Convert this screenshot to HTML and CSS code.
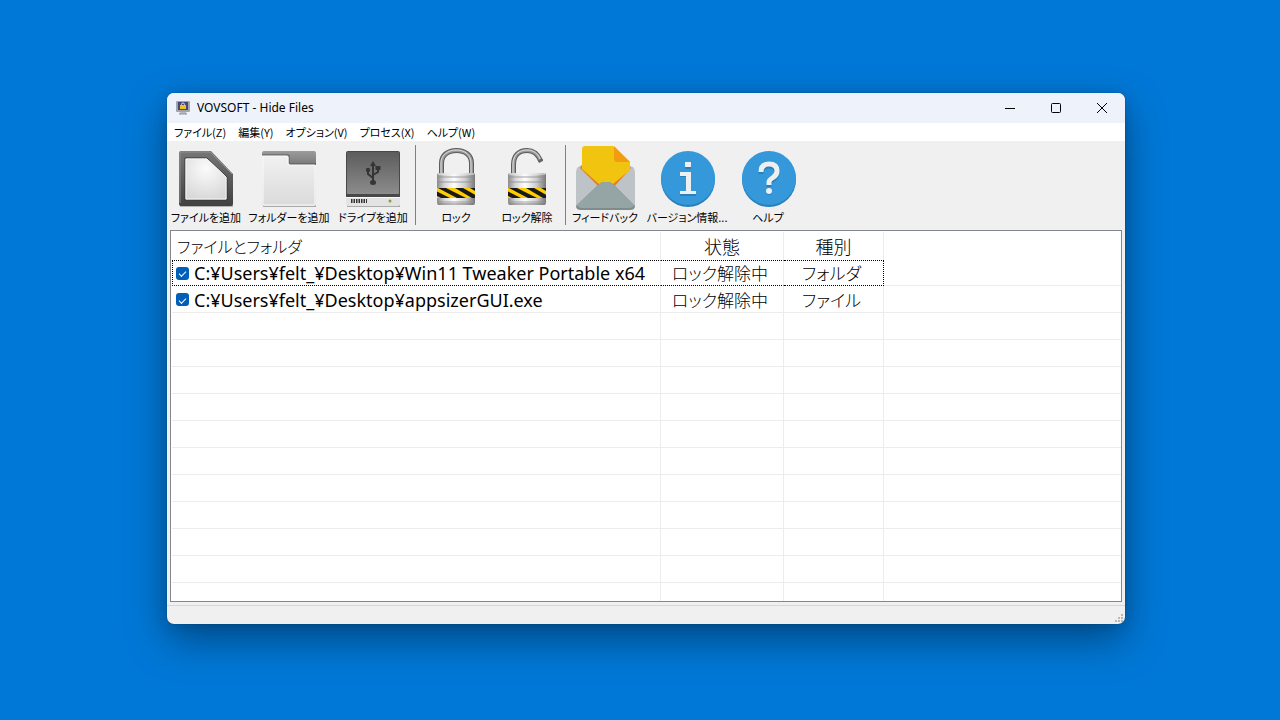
FILE: index.html
```html
<!DOCTYPE html>
<html lang="ja">
<head>
<meta charset="utf-8">
<title>VOVSOFT - Hide Files</title>
<link rel="stylesheet" href="styles.css">
</head>
<body>
<main class="window">
  <header class="titlebar">
    <svg class="app-icon" viewBox="0 0 14 14" aria-hidden="true">
      <rect x="0" y="0" width="14" height="11" rx="1" fill="#a3a5ab"/>
      <rect x="2" y="1" width="10" height="8" fill="#45467c"/>
      <path d="M5.500 5V3.500a1.500 1.500 0 0 1 3 0V5" fill="none" stroke="#d9d9de"/>
      <rect x="4" y="4" width="6" height="4" fill="#f0c21c"/>
      <path d="M4 11h6l1 2H3z" fill="#b9bac0"/>
      <path d="M3 13h8" stroke="#8f9096"/>
    </svg>
    <h1 class="title">VOVSOFT - Hide Files</h1>
    <div class="controls">
      <button class="control" aria-label="最小化"><svg viewBox="0 0 12 12"><path d="M1 6.500h10"/></svg></button>
      <button class="control" aria-label="最大化"><svg viewBox="0 0 12 12"><rect x="1.500" y="1.500" width="9" height="9" rx="1"/></svg></button>
      <button class="control" aria-label="閉じる"><svg viewBox="0 0 12 12"><path d="M1 1l10 10M11 1L1 11"/></svg></button>
    </div>
  </header>

  <nav class="menubar">
    <button class="menu">ファイル(Z)</button>
    <button class="menu">編集(Y)</button>
    <button class="menu">オプション(V)</button>
    <button class="menu">プロセス(X)</button>
    <button class="menu">ヘルプ(W)</button>
  </nav>

  <div class="toolbar">
    <button class="tool tool-file">
      <svg viewBox="0 0 64 64" aria-hidden="true">
        <defs>
          <linearGradient id="dark" x1="0" y1="0" x2="0" y2="1"><stop offset="0" stop-color="#777"/><stop offset="1" stop-color="#414141"/></linearGradient>
          <radialGradient id="paper" cx=".5" cy=".25" r=".8"><stop offset="0" stop-color="#fbfbfb"/><stop offset="1" stop-color="#d6d6d6"/></radialGradient>
        </defs>
        <path d="M6 60h53" stroke="#b5b5b5" stroke-width="2"/>
        <path d="M7 5h30l22 23v30q0 2-2 2H7q-2 0-2-2V7q0-2 2-2z" fill="url(#dark)"/>
        <path d="M6 57V7l1-1h29l22 22" fill="none" stroke="#909090"/>
        <path d="M11 12h22l20 19v23H11z" fill="url(#paper)" stroke="#363636"/>
        <path d="M12 53V13h21l19 18v22z" fill="none" stroke="#f5f5f5"/>
      </svg>
      <span>ファイルを追加</span>
    </button>
    <button class="tool tool-folder">
      <svg viewBox="0 0 64 64" aria-hidden="true">
        <defs>
          <linearGradient id="tab" x1="0" y1="0" x2="0" y2="1"><stop offset="0" stop-color="#9b9b9b"/><stop offset="1" stop-color="#696969"/></linearGradient>
          <linearGradient id="front" x1="0" y1="0" x2="0" y2="1"><stop offset="0" stop-color="#f1f1f1"/><stop offset="1" stop-color="#dadada"/></linearGradient>
        </defs>
        <path d="M6 60h53" stroke="#aaa" stroke-width="2"/>
        <path d="M7 5h50q2 0 2 2v18H5V7q0-2 2-2z" fill="url(#tab)"/>
        <path d="M5 10h25q2 0 2 2v5q0 2 2 2h25v39q0 2-2 2H7q-2 0-2-2z" fill="url(#front)"/>
        <path d="M5 9h26q1 0 1 1v7q0 1 1 1h26" fill="none" stroke="#575757"/>
        <path d="M5 10h25q1 0 1 1v7q0 1 1 1h26v39q0 1-1 1H7q-1 0-1-1V10" fill="none" stroke="#fafafa"/>
      </svg>
      <span>フォルダーを追加</span>
    </button>
    <button class="tool tool-drive">
      <svg viewBox="0 0 64 64" aria-hidden="true">
        <defs>
          <linearGradient id="drive" x1="0" y1="0" x2="0" y2="1"><stop offset="0" stop-color="#5c5c5c"/><stop offset="1" stop-color="#8c8c8c"/></linearGradient>
        </defs>
        <path d="M6 60h53" stroke="#aaa" stroke-width="2"/>
        <rect x="5" y="5" width="54" height="50" rx="2" fill="#484848"/>
        <rect x="6" y="6" width="52" height="42" rx="1" fill="url(#drive)"/>
        <path d="M5 51h54v7q0 2-2 2H7q-2 0-2-2z" fill="#e3e3e3"/>
        <path d="M5 51.500h54" stroke="#fafafa"/>
        <path d="M10 55h16" stroke="#333" stroke-width="4" stroke-dasharray="1.500 1"/>
        <circle cx="49" cy="55" r="1.500" fill="#80a336"/>
        <g fill="none" stroke="#353535" stroke-width="2"><path d="M32 18v18M32 32l-5-4v-5M32 29l5-3v-4"/></g>
        <path d="M32 15l3 5h-6zM34.500 20h5v4h-5z" fill="#353535"/><circle cx="27" cy="24" r="2.200" fill="#353535"/><ellipse cx="32" cy="36.500" rx="3" ry="2.500" fill="#353535"/>
      </svg>
      <span>ドライブを追加</span>
    </button>
    <span class="separator"></span>
    <button class="tool tool-lock">
      <svg viewBox="0 0 64 64" aria-hidden="true">
        <defs>
          <linearGradient id="steel" x1="0" y1="0" x2="1" y2="0"><stop offset="0" stop-color="#8c8c8c"/><stop offset=".2" stop-color="#d7d7d7"/><stop offset=".45" stop-color="#fff"/><stop offset=".75" stop-color="#ccc"/><stop offset="1" stop-color="#777"/></linearGradient>
          <clipPath id="band"><rect x="13" y="42" width="38" height="10"/></clipPath>
        </defs>
        <path d="M17.500 28V17.500C17.500 9 24 4.500 32.500 4.500S47.500 9 47.500 17.500V28" fill="none" stroke="#5c5c5c" stroke-width="5"/>
        <path d="M17.500 28V17.500C17.500 9 24 4.500 32.500 4.500S47.500 9 47.500 17.500V28" fill="none" stroke="#999" stroke-width="3"/>
        <path d="M17 28V17C17 9 24 4 32.500 4S47 9 47 17V28" fill="none" stroke="#ddd"/>
        <rect x="13" y="27" width="38" height="32" rx="2" fill="url(#steel)"/>
        <path d="M14 31h36M14 36h36M14 56h36" stroke="#8d8d8d" opacity=".4" stroke-width="2"/>
        <path d="M14 28h36" stroke="#eee"/><path d="M14 58h36" stroke="#777"/>
        <rect x="13" y="42" width="38" height="10" fill="#fc0"/>
        <path clip-path="url(#band)" d="M-3 42h9l20 10h-9zM14 42h8l20 10h-9zM31 42h8l18 10h-9zM46 42h5v3z" fill="#191919"/>
      </svg>
      <span>ロック</span>
    </button>
    <button class="tool tool-unlock">
      <svg viewBox="0 0 64 64" aria-hidden="true">
        <path d="M18.500 28V19C18.500 9 24 4.500 32 4.500c7 0 11 4 13.500 10" fill="none" stroke="#5c5c5c" stroke-width="5"/>
        <path d="M18.500 28V19C18.500 9 24 4.500 32 4.500c7 0 11 4 13 9" fill="none" stroke="#999" stroke-width="3"/>
        <path d="M18 28V18C18 9 24 4 32 4c7 0 11 4 13 9" fill="none" stroke="#ddd"/>
        <path d="M43 15l5-2v2l-4 2z" fill="#666"/>
        <rect x="13" y="27" width="38" height="32" rx="2" fill="url(#steel)"/>
        <path d="M14 31h36M14 36h36M14 56h36" stroke="#8d8d8d" opacity=".4" stroke-width="2"/>
        <path d="M14 28h36" stroke="#eee"/><path d="M14 58h36" stroke="#777"/>
        <rect x="13" y="42" width="38" height="10" fill="#fc0"/>
        <path clip-path="url(#band)" d="M-3 42h9l20 10h-9zM14 42h8l20 10h-9zM31 42h8l18 10h-9zM46 42h5v3z" fill="#191919"/>
      </svg>
      <span>ロック解除</span>
    </button>
    <span class="separator"></span>
    <button class="tool tool-feedback">
      <svg viewBox="0 0 64 64" aria-hidden="true">
        <path d="M3 26q0-3 2-5l4-2h46l5 2q2 2 2 5v35H3z" fill="#bdc3c7"/>
        <path d="M7 22l20 20h13l18-20-3-3H9z" fill="#e67e22"/>
        <path d="M12 0h28l17 16v8L40 38H26L9 23V3q0-3 3-3z" fill="#f1c40f"/>
        <path d="M41 0l16 16H44q-3 0-3-3z" fill="#f39c12"/>
        <path d="M3 60l22-21q3-3 6-3h4q3 0 6 3l21 21q0 4-5 4H8q-5 0-5-4z" fill="#7f8c8d"/>
        <path d="M4 59l21-20q3-3 6-3h4q3 0 6 3l20 20q-1 3-5 3H9q-4 0-5-3z" fill="#95a5a6"/>
      </svg>
      <span>フィードバック</span>
    </button>
    <button class="tool tool-about">
      <svg viewBox="0 0 64 64" aria-hidden="true">
        <circle cx="33" cy="34" r="27" fill="#2980b9"/><circle cx="33" cy="32" r="27" fill="#3498db"/>
        <path transform="translate(0 1)" d="M30 16h6v6h-6zM25 26h11v19h5v4H25v-4h6V30h-6z" fill="#2980b9"/>
        <path d="M30 16h6v5h-6zM25 26h11v19h5v3H25v-3h6V30h-6z" fill="#ecf0f1"/>
      </svg>
      <span>バージョン情報...</span>
    </button>
    <button class="tool tool-help">
      <svg viewBox="0 0 64 64" aria-hidden="true">
        <circle cx="33" cy="34" r="27" fill="#2980b9"/><circle cx="33" cy="32" r="27" fill="#3498db"/>
        <g fill="none" stroke="#2980b9" stroke-width="5" transform="translate(0 1)"><path d="M25 27q0-8 8-8t8 7q0 4-4 6.500T33 37v3"/></g>
        <path d="M25 26q0-8 8-8t8 7q0 4-4 6.500T33 36v3" fill="none" stroke="#ecf0f1" stroke-width="5"/>
        <circle cx="33" cy="46" r="3" fill="#2980b9"/><circle cx="33" cy="45" r="3" fill="#ecf0f1"/>
      </svg>
      <span>ヘルプ</span>
    </button>
  </div>

  <section class="list">
    <table class="files">
      <colgroup><col class="col-path"><col class="col-state"><col class="col-kind"><col></colgroup>
      <thead><tr><th>ファイルとフォルダ</th><th>状態</th><th>種別</th><td></td></tr></thead>
      <tbody>
        <tr class="focused"><td><label><input type="checkbox" checked>C:¥Users¥felt_¥Desktop¥Win11 Tweaker Portable x64</label></td><td>ロック解除中</td><td>フォルダ</td><td></td></tr>
        <tr><td><label><input type="checkbox" checked>C:¥Users¥felt_¥Desktop¥appsizerGUI.exe</label></td><td>ロック解除中</td><td>ファイル</td><td></td></tr>
        <tr><td></td><td></td><td></td><td></td></tr>
        <tr><td></td><td></td><td></td><td></td></tr>
        <tr><td></td><td></td><td></td><td></td></tr>
        <tr><td></td><td></td><td></td><td></td></tr>
        <tr><td></td><td></td><td></td><td></td></tr>
        <tr><td></td><td></td><td></td><td></td></tr>
        <tr><td></td><td></td><td></td><td></td></tr>
        <tr><td></td><td></td><td></td><td></td></tr>
        <tr><td></td><td></td><td></td><td></td></tr>
        <tr><td></td><td></td><td></td><td></td></tr>
        <tr class="last"><td></td><td></td><td></td><td></td></tr>
      </tbody>
    </table>
  </section>

  <footer class="statusbar">
    <svg class="grip" viewBox="0 0 9 9" aria-hidden="true"><path d="M6 0h2v2H6zM3 3h2v2H3zM6 3h2v2H6zM0 6h2v2H0zM3 6h2v2H3zM6 6h2v2H6z"/></svg>
  </footer>
</main>
</body>
</html>
```
FILE: styles.css
```css
* { box-sizing: border-box; }

body {
  margin: 0;
  min-height: 100vh;
  display: flex;
  padding: 93px 155px 96px 167px;
  background: #0078d7;
  color: #000;
  font-family: "Noto Sans", "Noto Sans CJK JP", sans-serif;
  font-size: 12px;
}

button {
  margin: 0;
  padding: 0;
  border: 0;
  background: none;
  color: inherit;
  font: inherit;
}

.window {
  flex: 1;
  min-width: 0;
  display: flex;
  flex-direction: column;
  overflow: hidden;
  border-radius: 7px;
  background: #f0f0f0;
  box-shadow: 0 0 1px rgba(0, 0, 0, .6), 0 16px 40px rgba(0, 0, 0, .38), 0 2px 16px rgba(0, 0, 0, .1);
}

.titlebar {
  display: flex;
  align-items: center;
  height: 30px;
  padding-left: 9px;
  background: #eef3fb;
}

.app-icon { width: 14px; height: 14px; }

.title {
  flex: 1;
  margin: 0 0 0 7px;
  font-size: 12px;
  font-weight: 400;
  line-height: 16px;
}

.controls { display: flex; }

.control {
  display: grid;
  place-items: center;
  width: 46px;
  height: 30px;
}

.control svg {
  width: 12px;
  height: 12px;
  fill: none;
  stroke: #000;
}

.menubar {
  display: flex;
  gap: 12px;
  height: 18px;
  padding-left: 7px;
  background: #fff;
  font-family: "Noto Sans CJK JP", sans-serif;
  font-size: 11px;
  font-feature-settings: "palt";
  line-height: 18px;
  white-space: nowrap;
}

.toolbar {
  display: flex;
  height: 89px;
  padding-top: 4px;
  font-family: "Noto Sans CJK JP", sans-serif;
  font-size: 11px;
  font-feature-settings: "palt";
}

.tool {
  display: flex;
  flex-direction: column;
  align-items: center;
  flex: none;
  padding-top: 1px;
  line-height: 14px;
  white-space: nowrap;
}

.tool svg { width: 64px; height: 64px; }

.tool-file { width: 78px; }
.tool-folder { width: 88px; }
.tool-drive { width: 80px; }
.tool-lock { width: 70px; }
.tool-unlock { width: 72px; }
.tool-feedback { width: 68px; }
.tool-about { width: 96px; }
.tool-help { width: 66px; }

.separator {
  width: 1px;
  height: 80px;
  margin: 0 5px 0 2px;
  background: #808080;
}

.list {
  flex: 1;
  margin: 0 3px;
  padding: 1px 0 0 1px;
  border: 1px solid #828790;
  background: #fff;
}

.files {
  width: 100%;
  table-layout: fixed;
  border-collapse: separate;
  border-spacing: 0;
  font-family: "Noto Sans CJK JP", sans-serif;
  font-size: 17px;
  line-height: 24px;
  font-feature-settings: "palt";
  white-space: nowrap;
}

.col-path { width: 489px; }
.col-state { width: 123px; }
.col-kind { width: 100px; }

.files tr { height: 27px; }

.files th,
.files td {
  padding: 1px 0 0;
  border-right: 1px solid #ececec;
  border-bottom: 1px solid #ececec;
  font-weight: 300;
  text-align: center;
}

.files tr > :first-child { padding-left: 4px; text-align: left; }
.files tr > :last-child { border-right: 0; }
.files tbody td:nth-child(2),
.files tbody td:nth-child(3) { padding-right: 4px; }

.files thead tr { height: 28px; }
.files thead th,
.files thead td { padding: 0; border-bottom: 0; font-size: 18px; }

.files thead th:first-child { padding-left: 5px; font-size: 16px; }

.files .focused { height: 26px; }
.files .focused td { padding-top: 0; }
.files .focused td:not(:last-child) {
  border-top: 1px dotted #000;
  border-bottom: 1px dotted #000;
}
.files .focused td:first-child { border-left: 1px dotted #000; padding-left: 3px; }
.files .focused td:nth-child(3) { border-right: 1px dotted #000; }
.files .last { height: 18px; }
.files .last td { border-bottom: 0; }

.files label {
  display: flex;
  align-items: center;
  gap: 5px;
  font-family: "Noto Sans", sans-serif;
  font-size: 18px;
  font-weight: 400;
}

.files input {
  appearance: none;
  flex: none;
  width: 13px;
  height: 13px;
  margin: 0;
  display: grid;
  place-items: center;
  border-radius: 3px;
  background: #005fb8;
}

.files input::before {
  content: "";
  width: 6px;
  height: 3px;
  border-left: 1px solid #fff;
  border-bottom: 1px solid #fff;
  transform: rotate(-45deg);
}

.statusbar {
  display: flex;
  justify-content: flex-end;
  align-items: flex-end;
  height: 19px;
  margin-top: 3px;
  padding: 0 1px 1px 0;
  border-top: 1px solid #d7d7d7;
}

.grip { width: 9px; height: 9px; fill: #b8b8b8; }
```
